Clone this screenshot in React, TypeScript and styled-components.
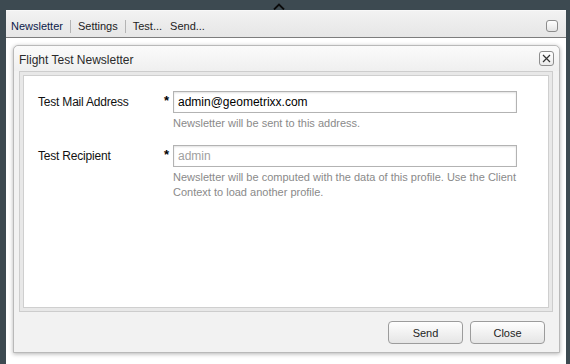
import React from "react";
import styled, { createGlobalStyle } from "styled-components";

const GlobalStyle = createGlobalStyle`
  html, body { margin: 0; padding: 0; }
  body {
    background: #3d4a51;
    font-family: "Liberation Sans", Arial, sans-serif;
  }
  * { box-sizing: border-box; }
`;

const Frame = styled.div`
  position: relative;
  width: 570px;
  height: 364px;
  padding: 10px 4px 0 6px;
  background: #3d4a51;
  display: flex;
  flex-direction: column;
`;

const Caret = styled.svg`
  position: absolute;
  left: 273px;
  top: 3px;
`;

const Window = styled.div`
  flex: 1;
  background: #ffffff;
  display: flex;
  flex-direction: column;
`;

const Toolbar = styled.div`
  height: 28px;
  padding: 4px 8px 0 1px;
  display: flex;
  align-items: center;
  background: linear-gradient(#f2f2f2, #e6e6e6);
  border-top: 1px solid #f8f8f8;
  border-bottom: 1px solid #7d7d7d;
  font-size: 11px;
  color: #1a1a1a;
`;

const ToolItem = styled.span<{ $active?: boolean }>`
  padding: 0 4px;
  color: ${(p) => (p.$active ? "#0b1a4a" : "#222")};
`;

const Sep = styled.span`
  width: 1px;
  height: 13px;
  margin: 0 3px;
  background: #b4b4b4;
`;

const Spacer = styled.span`
  flex: 1;
`;

const CheckBox = styled.span`
  width: 12px;
  height: 12px;
  border: 1px solid #8c8c8c;
  border-radius: 3px;
  background: linear-gradient(#ffffff, #e4e4e4);
`;

const Stage = styled.div`
  flex: 1;
  padding: 7px 0 0 7px;
`;

const Dialog = styled.div`
  width: 547px;
  height: 308px;
  border: 1px solid #b9b9b9;
  border-radius: 5px 5px 0 0;
  background: #f2f2f2;
  box-shadow: 0 1px 4px rgba(0, 0, 0, 0.3);
  display: flex;
  flex-direction: column;
`;

const Header = styled.div`
  height: 25px;
  padding: 3px 5px 0 5px;
  display: flex;
  align-items: flex-start;
  background: linear-gradient(#fbfbfb, #efefef);
  border-radius: 5px 5px 0 0;
`;

const Title = styled.div`
  flex: 1;
  line-height: 22px;
  font-size: 12px;
  color: #2a2a2a;
`;

const CloseBox = styled.span`
  margin-top: 2px;
  width: 15px;
  height: 15px;
  border: 1px solid #8e8e8e;
  border-radius: 3px;
  background: linear-gradient(#ffffff, #ececec);
  display: flex;
  align-items: center;
  justify-content: center;
`;

const BodyFrame = styled.div`
  height: 241px;
  margin: 0 6px 0 5px;
  border: 1px solid #cdcdcd;
  background: #e8e8e8;
  padding: 3px;
  display: flex;
`;

const BodyInner = styled.div`
  flex: 1;
  border: 1px solid #cfcfcf;
  background: #ffffff;
  padding: 15px 0 0 14px;
`;

const FormGrid = styled.div`
  display: grid;
  grid-template-columns: 126px 9px 344px;
`;

const Label = styled.div`
  font-size: 12px;
  line-height: 23px;
  letter-spacing: -0.2px;
  color: #111;
`;

const Req = styled.div`
  font-size: 13px;
  font-weight: bold;
  line-height: 20px;
  color: #000;
`;

const Field = styled.div<{ $gap: number }>`
  display: flex;
  flex-direction: column;
  margin-bottom: ${(p) => p.$gap}px;
`;

const Input = styled.div<{ $placeholder?: boolean }>`
  height: 22px;
  border: 1px solid #b3b3b3;
  box-shadow: inset 0 1px 2px rgba(0, 0, 0, 0.12);
  padding: 0 4px;
  font-size: 12px;
  line-height: 20px;
  color: ${(p) => (p.$placeholder ? "#a0a0a0" : "#000")};
`;

const Help = styled.div`
  margin-top: 3px;
  font-size: 11px;
  line-height: 15px;
  color: #8a8a8a;
  white-space: nowrap;
`;

const Footer = styled.div`
  flex: 1;
  padding: 9px 14px 0 0;
  display: flex;
  justify-content: flex-end;
  gap: 7px;
`;

const Button = styled.button`
  width: 75px;
  height: 23px;
  border: 1px solid #9c9c9c;
  border-radius: 4px;
  background: linear-gradient(#fefefe, #e5e5e5);
  font-family: "Liberation Sans", Arial, sans-serif;
  font-size: 11px;
  color: #1e1e1e;
  padding: 0;
`;

export default function App() {
  return (
    <>
      <GlobalStyle />
      <Frame>
        <Caret width="12" height="7" viewBox="0 0 12 7">
          <polyline points="1,6.5 6,1.5 11,6.5" fill="none" stroke="#0a0a0a" strokeWidth="1.8" />
        </Caret>
        <Window>
          <Toolbar>
            <ToolItem $active>Newsletter</ToolItem>
            <Sep />
            <ToolItem>Settings</ToolItem>
            <Sep />
            <ToolItem>Test...</ToolItem>
            <ToolItem>Send...</ToolItem>
            <Spacer />
            <CheckBox />
          </Toolbar>
          <Stage>
            <Dialog>
              <Header>
                <Title>Flight Test Newsletter</Title>
                <CloseBox>
                  <svg width="11" height="11" viewBox="0 0 11 11">
                    <path d="M2 2 L9 9 M9 2 L2 9" stroke="#333" strokeWidth="1.2" fill="none" />
                  </svg>
                </CloseBox>
              </Header>
              <BodyFrame>
                <BodyInner>
                  <FormGrid>
                    <Label>Test Mail Address</Label>
                    <Req>*</Req>
                    <Field $gap={14}>
                      <Input>admin@geometrixx.com</Input>
                      <Help>Newsletter will be sent to this address.</Help>
                    </Field>
                    <Label>Test Recipient</Label>
                    <Req>*</Req>
                    <Field $gap={0}>
                      <Input $placeholder>admin</Input>
                      <Help>
                        Newsletter will be computed with the data of this profile. Use the Client
                        <br />
                        Context to load another profile.
                      </Help>
                    </Field>
                  </FormGrid>
                </BodyInner>
              </BodyFrame>
              <Footer>
                <Button>Send</Button>
                <Button>Close</Button>
              </Footer>
            </Dialog>
          </Stage>
        </Window>
      </Frame>
    </>
  );
}
